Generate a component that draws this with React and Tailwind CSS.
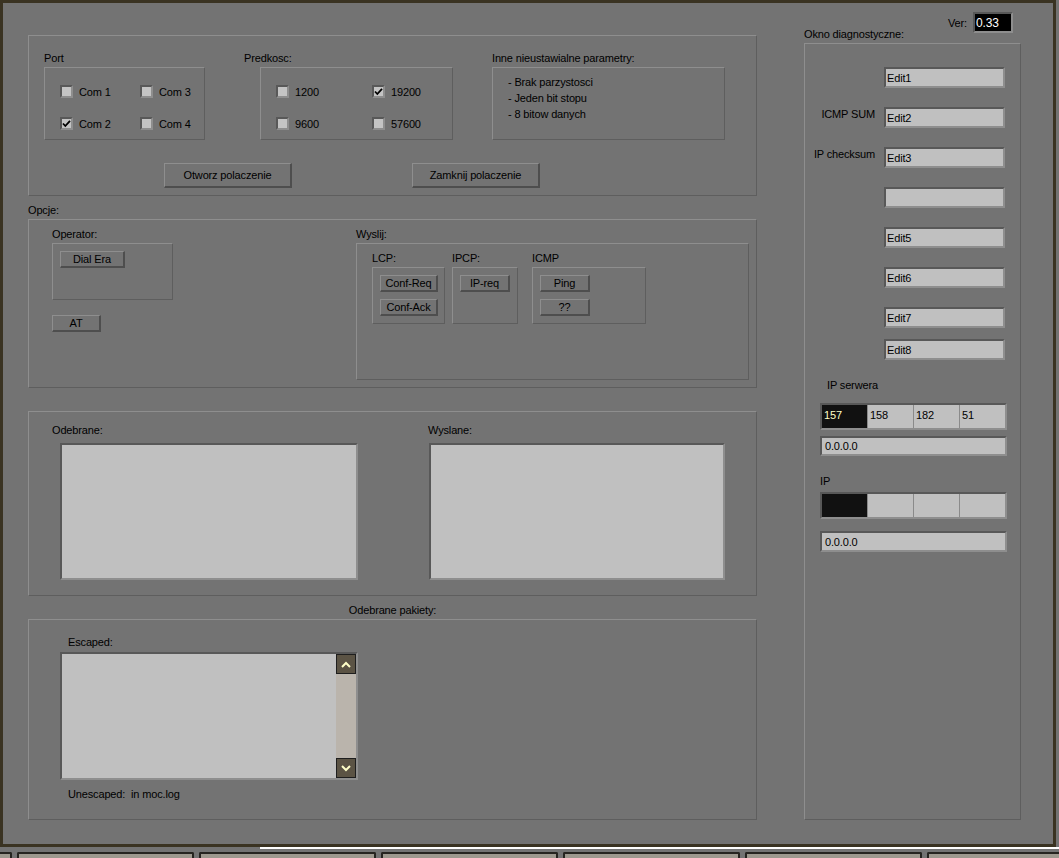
import React from 'react';

const etched = 'border border-t-[#8e8e8e] border-l-[#8e8e8e] border-b-[#5e5e5e] border-r-[#5e5e5e]';
const sunken = 'border-2 border-t-[#585858] border-l-[#585858] border-b-[#8e8e8e] border-r-[#8e8e8e]';
const raised = 'border border-t-[#8e8e8e] border-l-[#8e8e8e] border-b-[#4e4e4e] border-r-[#4e4e4e] border-b-2 border-r-2';

const Btn = ({ w, h = 'h-[17px]', children }) => (
  <div className={`${raised} ${w} ${h} flex items-center justify-center bg-[#737373]`}>{children}</div>
);

const Check = ({ checked, label }) => (
  <div className="flex items-center gap-[6px] h-[13px]">
    <div className={`w-[13px] h-[13px] ${sunken} bg-[#c4c4c4] flex items-center justify-center`}>
      {checked && (
        <svg width="9" height="9" viewBox="0 0 9 9">
          <path d="M1 4.5 L3.3 7 L8 1.8" stroke="#000" strokeWidth="1.8" fill="none" />
        </svg>
      )}
    </div>
    <span>{label}</span>
  </div>
);

const Edit = ({ w = 'w-[121px]', h = 'h-[21px]', children }) => (
  <div className={`${sunken} ${w} ${h} bg-[#c0c0c0] flex items-center pl-[1px]`}>{children}</div>
);

const IpBox = ({ values = ['', '', '', ''] }) => (
  <div className={`${sunken} w-[187px] h-[27px] bg-[#c0c0c0] flex ml-[15px]`}>
    <div className="w-[45px] bg-[#111111] text-[#ffffc8] pl-[2px] pt-[3px]">{values[0]}</div>
    <div className="w-[46px] border-l border-[#8a8a8a] pl-[2px] pt-[3px]">{values[1]}</div>
    <div className="w-[46px] border-l border-[#8a8a8a] pl-[2px] pt-[3px]">{values[2]}</div>
    <div className="flex-1 border-l border-[#8a8a8a] pl-[2px] pt-[3px]">{values[3]}</div>
  </div>
);

const Chevron = ({ up }) => (
  <svg width="10" height="7" viewBox="0 0 10 7">
    <path d={up ? 'M1 6 L5 2 L9 6' : 'M1 1 L5 5 L9 1'} stroke="#ffffc8" strokeWidth="2" fill="none" />
  </svg>
);

const App = () => {
  const lbl = 'h-[14px] leading-[14px] whitespace-nowrap';
  const diag = [
    { label: '', text: 'Edit1' },
    { label: 'ICMP SUM', text: 'Edit2' },
    { label: 'IP checksum', text: 'Edit3' },
    { label: '', text: '' },
    { label: '', text: 'Edit5' },
    { label: '', text: 'Edit6' },
    { label: '', text: 'Edit7' },
  ];

  return (
    <div className="w-[1059px] h-[858px] bg-[#737373] overflow-hidden font-['Liberation_Sans',Arial,sans-serif] text-[11px] leading-[14px] tracking-[-0.15px] text-black">
      <div className="w-[1056px] h-[847px] border-[3px] border-[#3a3322] flex">
        {/* left column */}
        <div className="ml-[25px] w-[729px] flex flex-col">
          <div className={`${etched} mt-[32px] h-[161px] pl-[15px] pt-[15px]`}>
            <div className="flex">
              <div className="w-[161px]">
                <div className={`${lbl} mb-[2px]`}>Port</div>
                <div className={`${etched} h-[73px] pl-[15px] pt-[17px] grid grid-cols-[80px_80px] gap-y-[19px] content-start`}>
                  <Check label="Com 1" />
                  <Check label="Com 3" />
                  <Check label="Com 2" checked />
                  <Check label="Com 4" />
                </div>
              </div>
              <div className="ml-[39px]">
                <div className={`${lbl} mb-[2px]`}>Predkosc:</div>
                <div className={`${etched} ml-[16px] w-[193px] h-[73px] pl-[15px] pt-[17px] grid grid-cols-[96px_80px] gap-y-[19px] content-start`}>
                  <Check label="1200" />
                  <Check label="19200" checked />
                  <Check label="9600" />
                  <Check label="57600" />
                </div>
              </div>
              <div className="ml-[39px]">
                <div className={`${lbl} mb-[2px]`}>Inne nieustawialne parametry:</div>
                <div className={`${etched} w-[233px] h-[73px] pl-[15px] pt-[6px] leading-[16px]`}>
                  <div>- Brak parzystosci</div>
                  <div>- Jeden bit stopu</div>
                  <div>- 8 bitow danych</div>
                </div>
              </div>
            </div>
            <div className="flex mt-[23px] ml-[120px] gap-[120px]">
              <Btn w="w-[128px]" h="h-[25px]">Otworz polaczenie</Btn>
              <Btn w="w-[128px]" h="h-[25px]">Zamknij polaczenie</Btn>
            </div>
          </div>

          <div className={`${lbl} mt-[7px] mb-[2px]`}>Opcje:</div>
          <div className={`${etched} h-[169px] pl-[23px] pt-[7px] flex`}>
            <div className="w-[121px]">
              <div className={`${lbl} mb-[2px]`}>Operator:</div>
              <div className={`${etched} h-[57px] pl-[7px] pt-[7px]`}>
                <Btn w="w-[65px]">Dial Era</Btn>
              </div>
              <div className="mt-[15px]">
                <Btn w="w-[49px]">AT</Btn>
              </div>
            </div>
            <div className="ml-[183px]">
              <div className={`${lbl} mb-[2px]`}>Wyslij:</div>
              <div className={`${etched} w-[393px] h-[137px] pl-[15px] pt-[7px] flex`}>
                <div>
                  <div className={`${lbl} mb-[2px]`}>LCP:</div>
                  <div className={`${etched} w-[73px] h-[57px] pl-[7px] pt-[7px] flex flex-col gap-[7px]`}>
                    <Btn w="w-[58px]">Conf-Req</Btn>
                    <Btn w="w-[58px]">Conf-Ack</Btn>
                  </div>
                </div>
                <div className="ml-[7px]">
                  <div className={`${lbl} mb-[2px]`}>IPCP:</div>
                  <div className={`${etched} w-[66px] h-[57px] pl-[7px] pt-[7px]`}>
                    <Btn w="w-[50px]">IP-req</Btn>
                  </div>
                </div>
                <div className="ml-[14px]">
                  <div className={`${lbl} mb-[2px]`}>ICMP</div>
                  <div className={`${etched} w-[114px] h-[57px] pl-[7px] pt-[7px] flex flex-col gap-[7px]`}>
                    <Btn w="w-[50px]">Ping</Btn>
                    <Btn w="w-[50px]">??</Btn>
                  </div>
                </div>
              </div>
            </div>
          </div>

          <div className={`${etched} mt-[23px] h-[185px] pl-[23px] pt-[11px] flex`}>
            <div>
              <div className={lbl}>Odebrane:</div>
              <div className={`${sunken} ml-[8px] mt-[6px] w-[298px] h-[137px] bg-[#c0c0c0]`} />
            </div>
            <div className="ml-[70px]">
              <div className={lbl}>Wyslane:</div>
              <div className={`${sunken} ml-[1px] mt-[6px] w-[296px] h-[137px] bg-[#c0c0c0]`} />
            </div>
          </div>

          <div className={`${lbl} mt-[7px] mb-[2px] text-center`}>Odebrane pakiety:</div>
          <div className={`${etched} h-[201px] pl-[31px] pt-[15px]`}>
            <div className={`${lbl} ml-[8px]`}>Escaped:</div>
            <div className={`${sunken} mt-[3px] w-[298px] h-[128px] bg-[#c0c0c0] flex justify-end`}>
              <div className="w-[20px] flex flex-col bg-[#bab4ac]">
                <div className="h-[20px] bg-[#5b5344] border border-[#1e1e1e] flex items-center justify-center">
                  <Chevron up />
                </div>
                <div className="flex-1" />
                <div className="h-[20px] bg-[#5b5344] border border-[#1e1e1e] flex items-center justify-center">
                  <Chevron />
                </div>
              </div>
            </div>
            <div className={`${lbl} ml-[8px] mt-[7px] whitespace-pre`}>Unescaped:  in moc.log</div>
          </div>
        </div>

        {/* right column */}
        <div className="ml-[47px] w-[217px] flex flex-col">
          <div className="mt-[9px] h-[21px] pl-[144px] flex items-center">
            <div className="w-[25px]">Ver:</div>
            <div className={`${sunken} w-[40px] h-[21px] bg-black text-white flex items-center pl-[1px] text-[12px]`}>0.33</div>
          </div>
          <div className={`${lbl} -mt-[6px] mb-[2px]`}>Okno diagnostyczne:</div>
          <div className={`${etched} h-[777px] pt-[23px] flex flex-col`}>
            <div className="flex flex-col gap-[19px]">
              {diag.map((d, i) => (
                <div key={i} className="flex h-[21px]">
                  <div className={`w-[79px] text-right pr-[9px] ${lbl}`}>{d.label}</div>
                  <Edit>{d.text}</Edit>
                </div>
              ))}
            </div>
            <div className="flex h-[21px] mt-[11px]">
              <div className="w-[79px]" />
              <Edit>Edit8</Edit>
            </div>
            <div className={`${lbl} mt-[18px] pl-[22px]`}>IP serwera</div>
            <div className="mt-[11px]">
              <IpBox values={['157', '158', '182', '51']} />
            </div>
            <div className="mt-[6px] ml-[15px]">
              <Edit w="w-[187px]" h="h-[20px]">
                <span className="pl-[2px]">0.0.0.0</span>
              </Edit>
            </div>
            <div className={`${lbl} mt-[18px] pl-[15px]`}>IP</div>
            <div className="mt-[4px]">
              <IpBox />
            </div>
            <div className="mt-[12px] ml-[15px]">
              <Edit w="w-[187px]">
                <span className="pl-[2px]">0.0.0.0</span>
              </Edit>
            </div>
          </div>
        </div>
      </div>

      {/* below the window */}
      <div className="ml-[260px] h-[2px] bg-white" />
      <div className="h-[3px]" />
      <div className="flex gap-[5px] h-[6px]">
        <div className="w-[12px] bg-[#9d988e] border-t-2 border-r-2 border-[#262420] rounded-tr-[2px]" />
        {[0, 1, 2, 3, 4].map((i) => (
          <div key={i} className="w-[177px] bg-[#9d988e] border-t-2 border-x-2 border-[#262420] rounded-t-[2px]" />
        ))}
        <div className="flex-1 bg-[#9d988e] border-t-2 border-l-2 border-[#262420] rounded-tl-[2px]" />
      </div>
    </div>
  );
};

export default App;
